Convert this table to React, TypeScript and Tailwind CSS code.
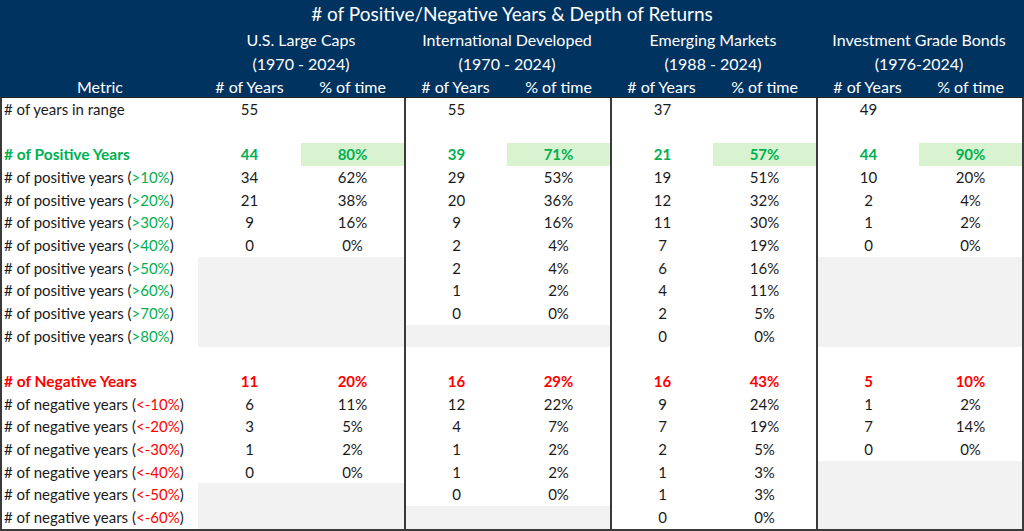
import React from 'react';

type Cell = [string, string] | null;

type Row = {
  label: React.ReactNode;
  kind?: 'pos' | 'neg' | 'blank' | 'plain';
  cells: Cell[];
};

const GREEN = 'text-[#00b050]';
const RED = 'text-[#ff0000]';

const posLabel = (t: string) => (
  <>
    # of positive years (<span className={GREEN}>{t}</span>)
  </>
);
const negLabel = (t: string) => (
  <>
    # of negative years (<span className={RED}>{t}</span>)
  </>
);

const rows: Row[] = [
  { label: '# of years in range', kind: 'plain', cells: [['55', ''], ['55', ''], ['37', ''], ['49', '']] },
  { label: '', kind: 'blank', cells: [['', ''], ['', ''], ['', ''], ['', '']] },
  { label: '# of Positive Years', kind: 'pos', cells: [['44', '80%'], ['39', '71%'], ['21', '57%'], ['44', '90%']] },
  { label: posLabel('>10%'), cells: [['34', '62%'], ['29', '53%'], ['19', '51%'], ['10', '20%']] },
  { label: posLabel('>20%'), cells: [['21', '38%'], ['20', '36%'], ['12', '32%'], ['2', '4%']] },
  { label: posLabel('>30%'), cells: [['9', '16%'], ['9', '16%'], ['11', '30%'], ['1', '2%']] },
  { label: posLabel('>40%'), cells: [['0', '0%'], ['2', '4%'], ['7', '19%'], ['0', '0%']] },
  { label: posLabel('>50%'), cells: [null, ['2', '4%'], ['6', '16%'], null] },
  { label: posLabel('>60%'), cells: [null, ['1', '2%'], ['4', '11%'], null] },
  { label: posLabel('>70%'), cells: [null, ['0', '0%'], ['2', '5%'], null] },
  { label: posLabel('>80%'), cells: [null, null, ['0', '0%'], null] },
  { label: '', kind: 'blank', cells: [['', ''], ['', ''], ['', ''], ['', '']] },
  { label: '# of Negative Years', kind: 'neg', cells: [['11', '20%'], ['16', '29%'], ['16', '43%'], ['5', '10%']] },
  { label: negLabel('<-10%'), cells: [['6', '11%'], ['12', '22%'], ['9', '24%'], ['1', '2%']] },
  { label: negLabel('<-20%'), cells: [['3', '5%'], ['4', '7%'], ['7', '19%'], ['7', '14%']] },
  { label: negLabel('<-30%'), cells: [['1', '2%'], ['1', '2%'], ['2', '5%'], ['0', '0%']] },
  { label: negLabel('<-40%'), cells: [['0', '0%'], ['1', '2%'], ['1', '3%'], null] },
  { label: negLabel('<-50%'), cells: [null, ['0', '0%'], ['1', '3%'], null] },
  { label: negLabel('<-60%'), cells: [null, null, ['0', '0%'], null] },
];

const groups = [
  ['U.S. Large Caps', '(1970 - 2024)'],
  ['International Developed', '(1970 - 2024)'],
  ['Emerging Markets', '(1988 - 2024)'],
  ['Investment Grade Bonds', '(1976-2024)'],
];

const cols = 'grid grid-cols-[196px_repeat(8,103px)]';

export default function App() {
  return (
    <div className="w-[1024px] h-[531px] overflow-hidden bg-white font-['Lato',sans-serif] text-[#1a1a1a]">
      {/* header */}
      <div className="bg-[#00335f] text-white px-[2px] text-[16px] leading-none">
        <div className="h-[27px] flex items-center justify-center text-[19px]">
          # of Positive/Negative Years &amp; Depth of Returns
        </div>
        <div className={`${cols} h-[25px] items-center`}>
          <div />
          {groups.map(([g]) => (
            <div key={g} className="col-span-2 text-center">{g}</div>
          ))}
        </div>
        <div className={`${cols} h-[23px] items-center`}>
          <div />
          {groups.map(([g, y]) => (
            <div key={g} className="col-span-2 text-center">{y}</div>
          ))}
        </div>
        <div className={`${cols} h-[22px] items-center pt-[2px]`}>
          <div className="text-center">Metric</div>
          {groups.map(([g]) => (
            <React.Fragment key={g}>
              <div className="text-center"># of Years</div>
              <div className="text-center">% of time</div>
            </React.Fragment>
          ))}
        </div>
      </div>

      {/* body */}
      <div className="border-t border-[#222] border-x-2 border-b-2 border-x-[#3a3a3a] border-b-[#3a3a3a] text-[15px] leading-none">
        {rows.map((r, i) => {
          const bold = r.kind === 'pos' || r.kind === 'neg';
          const color = r.kind === 'pos' ? GREEN : r.kind === 'neg' ? RED : '';
          return (
            <div key={i} className={`${cols} h-[22.68px]`}>
              <div
                className={`flex items-center pl-[2px] whitespace-nowrap ${
                  bold ? `font-bold text-[15.5px] ${color}` : ''
                }`}
              >
                {r.label}
              </div>
              {r.cells.map((c, g) => {
                const edge = g > 0 ? 'border-l-2 border-[#3a3a3a]' : '';
                if (!c) {
                  return (
                    <React.Fragment key={g}>
                      <div className={`bg-[#f2f2f2] ${edge}`} />
                      <div className="bg-[#f2f2f2]" />
                    </React.Fragment>
                  );
                }
                return (
                  <React.Fragment key={g}>
                    <div className={`flex items-center justify-center ${edge} ${bold ? `font-bold ${color}` : ''}`}>
                      {c[0]}
                    </div>
                    <div
                      className={`flex items-center justify-center ${
                        r.kind === 'pos' ? 'bg-[#d9f2d0]' : ''
                      } ${bold ? `font-bold ${color}` : ''}`}
                    >
                      {c[1]}
                    </div>
                  </React.Fragment>
                );
              })}
            </div>
          );
        })}
      </div>
    </div>
  );
}
